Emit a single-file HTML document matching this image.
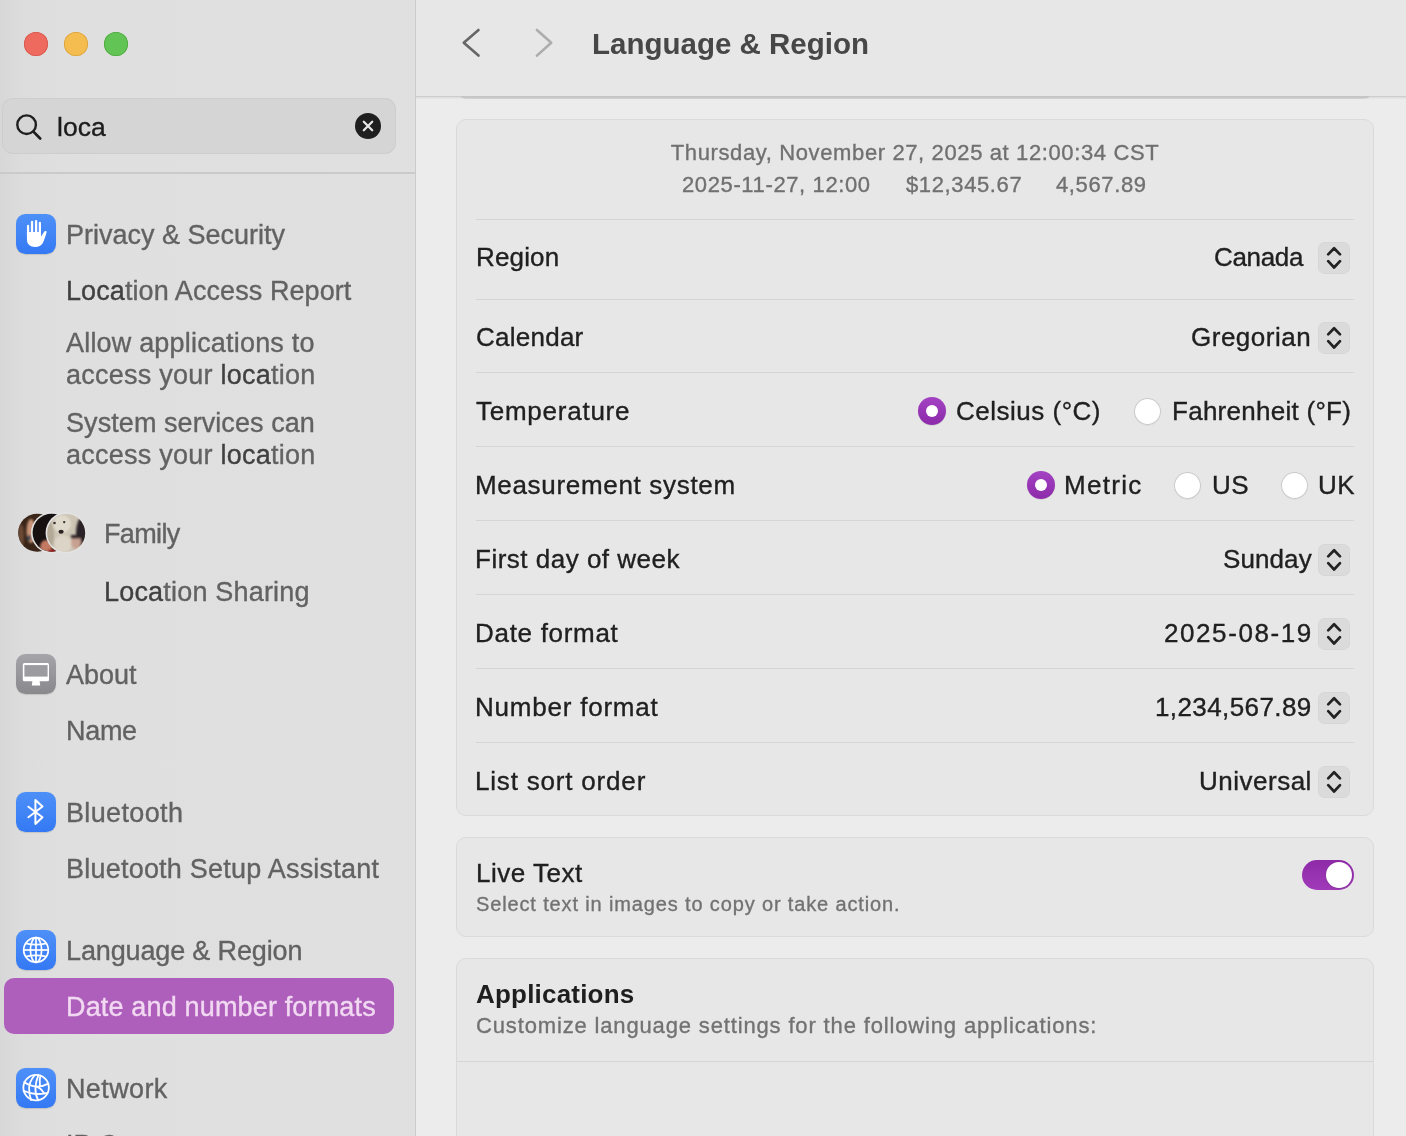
<!DOCTYPE html>
<html><head><meta charset="utf-8"><style>
html,body{margin:0;padding:0;width:1406px;height:1136px;overflow:hidden;background:#ececec;}
body{position:relative;font-family:"Liberation Sans", sans-serif;-webkit-font-smoothing:antialiased;}
.t{position:absolute;white-space:nowrap;line-height:1;-webkit-text-stroke:0.35px currentColor;will-change:transform;}
</style></head><body>
<div style="position:absolute;left:0px;top:0px;width:415px;height:1136px;background:linear-gradient(90deg,#d7d7d7 0,#dcdcdc 20px,#dfdfdf 60px,#e0e0e0 100%);"></div>
<div style="position:absolute;left:415px;top:0px;width:1px;height:1136px;background:#cbcbcb;"></div>
<div style="position:absolute;left:24px;top:32px;width:24px;height:24px;border-radius:50%;background:#ee6a5f;box-shadow:inset 0 0 0 0.8px #d5574c;"></div>
<div style="position:absolute;left:64px;top:32px;width:24px;height:24px;border-radius:50%;background:#f5bd4f;box-shadow:inset 0 0 0 0.8px #d9a13c;"></div>
<div style="position:absolute;left:104px;top:32px;width:24px;height:24px;border-radius:50%;background:#61c454;box-shadow:inset 0 0 0 0.8px #4ea83f;"></div>
<div style="position:absolute;left:2px;top:98px;width:394px;height:56px;background:#d5d5d5;border-radius:11px;box-shadow:inset 0 0 0 1px rgba(0,0,0,0.035);"></div>
<svg style="position:absolute;left:14px;top:111.5px" width="30" height="30" viewBox="0 0 30 30"><circle cx="12.6" cy="12.7" r="9.3" fill="none" stroke="#1e1e1e" stroke-width="2.4"/><line x1="19.4" y1="19.6" x2="26.2" y2="26.5" stroke="#1e1e1e" stroke-width="2.7" stroke-linecap="round"/></svg>
<div class="t" style="top:113.77px;font-size:26.5px;color:#1c1c1c;left:57px;">loca</div>
<svg style="position:absolute;left:355px;top:113px" width="26" height="26" viewBox="0 0 26 26"><circle cx="13" cy="13" r="13" fill="#1f1f1f"/><path d="M8.8 8.8 L17.2 17.2 M17.2 8.8 L8.8 17.2" stroke="#e6e6e6" stroke-width="2.3" stroke-linecap="round"/></svg>
<div style="position:absolute;left:0px;top:172px;width:415px;height:2px;background:#cacaca;"></div>
<div style="position:absolute;left:16px;top:214px;width:40px;height:40px;border-radius:9.5px;background:linear-gradient(#4e90f8,#3479f4);box-shadow:0 0.5px 1px rgba(0,0,0,0.12);"><svg width="40" height="40" viewBox="0 0 40 40" style="position:absolute;left:0;top:0"><path fill="#fff" d="M10.95,18 L24.95,18 L24.95,22.8 L28.3,17.6 C29,16.5 30.9,16.9 30.6,18.3 C30.1,20.5 28.6,24.8 27.2,28.3 C25.9,31.5 23.2,33 19,33 C14.2,33 10.95,30 10.95,25.8 Z"/><rect x="10.95" y="10.8" width="2.25" height="12" rx="1.12" fill="#fff"/><rect x="14.85" y="6.7" width="2.35" height="14" rx="1.17" fill="#fff"/><rect x="18.9" y="5.95" width="2.35" height="14" rx="1.17" fill="#fff"/><rect x="22.75" y="7.7" width="2.25" height="14" rx="1.12" fill="#fff"/></svg></div>
<div class="t" style="top:222.14px;font-size:27px;color:#626262;left:66px;">Privacy &amp; Security</div>
<div class="t" style="top:278.14px;font-size:27px;color:#626262;letter-spacing:0.08px;left:66px;"><span style="color:#404040">Loca</span>tion Access Report</div>
<div class="t" style="top:330.14px;font-size:27px;color:#626262;letter-spacing:0.19px;left:66px;">Allow applications to</div>
<div class="t" style="top:362.14px;font-size:27px;color:#626262;letter-spacing:0.24px;left:66px;">access your <span style="color:#404040">loca</span>tion</div>
<div class="t" style="top:410.14px;font-size:27px;color:#626262;letter-spacing:0.07px;left:66px;">System services can</div>
<div class="t" style="top:442.14px;font-size:27px;color:#626262;letter-spacing:0.24px;left:66px;">access your <span style="color:#404040">loca</span>tion</div>
<svg style="position:absolute;left:0;top:500px" width="100" height="60" viewBox="0 0 100 60">
<defs><clipPath id="c1"><circle cx="37.2" cy="32.7" r="19"/></clipPath><clipPath id="c2"><circle cx="51.6" cy="32.7" r="19"/></clipPath><clipPath id="c3"><circle cx="66.2" cy="32.9" r="19"/></clipPath>
<filter id="bl" x="-20%" y="-20%" width="140%" height="140%"><feGaussianBlur stdDeviation="1.1"/></filter></defs>
<g clip-path="url(#c1)"><rect x="0" y="0" width="100" height="60" fill="#3a2518"/><g filter="url(#bl)"><ellipse cx="31" cy="31" rx="4.5" ry="12" fill="#c99478"/><ellipse cx="21" cy="36" rx="3" ry="12" fill="#6a4a36"/><ellipse cx="29" cy="38" rx="2" ry="3" fill="#3a4a55"/></g></g>
<circle cx="51.6" cy="32.7" r="20.6" fill="#e3e3e3"/>
<g clip-path="url(#c2)"><rect x="0" y="0" width="100" height="60" fill="#161010"/><g filter="url(#bl)"><ellipse cx="46" cy="47" rx="6" ry="7" fill="#c47a62"/><ellipse cx="52" cy="52" rx="5" ry="3" fill="#a02020"/></g></g>
<circle cx="66.2" cy="32.9" r="20.6" fill="#e3e3e3"/>
<g clip-path="url(#c3)"><rect x="0" y="0" width="100" height="60" fill="#cdc4b4"/><g filter="url(#bl)"><ellipse cx="50" cy="36" rx="4" ry="14" fill="#b3a896"/><ellipse cx="62" cy="24" rx="9" ry="9" fill="#e0dacd"/><ellipse cx="63" cy="44" rx="9" ry="9" fill="#dcd5c7"/>
<ellipse cx="81.5" cy="33" rx="5.5" ry="15" fill="#2a2426"/><ellipse cx="76" cy="42" rx="5" ry="7" fill="#c9a192"/><rect x="70.5" y="35" width="10" height="3.5" rx="1.7" fill="#2c2426"/></g>
<circle cx="54.5" cy="23" r="1.3" fill="#3a3030"/><circle cx="64.2" cy="22.1" r="1.2" fill="#3a3030"/><ellipse cx="61.1" cy="31.8" rx="2.6" ry="2" fill="#2a2222"/></g>
</svg>
<div class="t" style="top:520.64px;font-size:27px;color:#626262;letter-spacing:-0.65px;left:104px;">Family</div>
<div class="t" style="top:578.74px;font-size:27px;color:#626262;letter-spacing:0.19px;left:104px;"><span style="color:#404040">Loca</span>tion Sharing</div>
<div style="position:absolute;left:16px;top:654px;width:40px;height:40px;border-radius:9.5px;background:linear-gradient(#a4a4a9,#88888d);box-shadow:0 0.5px 1px rgba(0,0,0,0.12);"><svg width="40" height="40" viewBox="0 0 40 40" style="position:absolute;left:0;top:0"><rect x="6.8" y="9.1" width="26.2" height="18.2" rx="1.6" fill="#fff"/><rect x="8.4" y="11.1" width="23.2" height="11.5" fill="#9c9ca0"/><path d="M16.4,27 L23.6,27 L24.2,31.6 L15.8,31.6 Z" fill="#fff"/></svg></div>
<div class="t" style="top:661.89px;font-size:27px;color:#626262;left:66px;">About</div>
<div class="t" style="top:718.14px;font-size:27px;color:#626262;letter-spacing:-0.3px;left:66px;">Name</div>
<div style="position:absolute;left:16px;top:792px;width:40px;height:40px;border-radius:9.5px;background:linear-gradient(#4e90f8,#3479f4);box-shadow:0 0.5px 1px rgba(0,0,0,0.12);"><svg width="40" height="40" viewBox="0 0 40 40" style="position:absolute;left:0;top:0"><path d="M12.4,14.7 L26.5,25.2 L19.4,31.9 L19.4,7.9 L26.5,14.5 L12.4,25.2" fill="none" stroke="#fff" stroke-width="2" stroke-linejoin="round" stroke-linecap="round"/></svg></div>
<div class="t" style="top:800.14px;font-size:27px;color:#626262;letter-spacing:0.36px;left:66px;">Bluetooth</div>
<div class="t" style="top:856.14px;font-size:27px;color:#626262;letter-spacing:0.22px;left:66px;">Bluetooth Setup Assistant</div>
<div style="position:absolute;left:16px;top:930px;width:40px;height:40px;border-radius:9.5px;background:linear-gradient(#4e90f8,#3479f4);box-shadow:0 0.5px 1px rgba(0,0,0,0.12);"><svg width="40" height="40" viewBox="0 0 40 40" style="position:absolute;left:0;top:0"><g fill="none" stroke="#fff" stroke-width="1.7"><circle cx="20" cy="20" r="12.3"/><ellipse cx="20" cy="20" rx="5.6" ry="12.3"/><line x1="20" y1="7.7" x2="20" y2="32.3"/><line x1="7.7" y1="20" x2="32.3" y2="20"/><path d="M9.6,13.4 Q20,16 30.4,13.4 M9.6,26.6 Q20,24 30.4,26.6"/></g></svg></div>
<div class="t" style="top:937.64px;font-size:27px;color:#626262;letter-spacing:-0.14px;left:66px;">Language &amp; Region</div>
<div style="position:absolute;left:4px;top:978px;width:390px;height:56px;background:#ad5fbb;border-radius:10px;"></div>
<div class="t" style="top:993.74px;font-size:27px;color:#f2d9f2;letter-spacing:0.16px;left:66px;">Date and number formats</div>
<div style="position:absolute;left:16px;top:1068px;width:40px;height:40px;border-radius:9.5px;background:linear-gradient(#4e90f8,#3479f4);box-shadow:0 0.5px 1px rgba(0,0,0,0.12);"><svg width="40" height="40" viewBox="0 0 40 40" style="position:absolute;left:0;top:0"><g fill="none" stroke="#fff" stroke-width="1.8" stroke-linecap="round"><circle cx="20.1" cy="19.6" r="12.75"/><path d="M18.6,7.2 C15.5,11 13.2,15 13.1,20 C13,25 13.8,28.5 15,32"/><path d="M22.4,7.1 C20.8,11 19.6,15.5 19.4,20 C19.2,25 20.2,28.5 22.2,32.2"/><path d="M24.4,7.6 C23.5,11 23.4,14 24,17.8"/><path d="M8.2,14 C12,16.8 16,18.3 20.5,18.6 C24.5,18.8 28.5,17.6 32.4,15.6"/><path d="M7.6,22.8 C11.5,24.6 15.5,25.8 20,26 C24,26.1 28,25.6 31.6,24.8"/><path d="M20.5,18.6 C23.5,19.6 26,21.8 28.2,25.4"/></g></svg></div>
<div class="t" style="top:1075.89px;font-size:27px;color:#626262;letter-spacing:0.37px;left:66px;">Network</div>
<div class="t" style="top:1132.14px;font-size:27px;color:#626262;left:66px;">IP Camera</div>
<div style="position:absolute;left:416px;top:0px;width:990px;height:1136px;background:#ececec;"></div>
<div style="position:absolute;left:416px;top:0px;width:990px;height:96px;background:#e7e7e7;"></div>
<div style="position:absolute;left:416px;top:96px;width:990px;height:1px;background:#cdcdcd;"></div>
<div style="position:absolute;left:416px;top:97px;width:990px;height:2px;background:linear-gradient(#dcdcdc,#e8e8e8);"></div>
<div style="position:absolute;left:461px;top:96px;width:908px;height:2.6px;background:linear-gradient(#c4c4c4,#c8c8c8 60%,#d6d6d6);border-radius:0 0 6px 6px / 0 0 2.6px 2.6px;"></div>
<svg style="position:absolute;left:455px;top:22px" width="100" height="42" viewBox="0 0 100 42"><path d="M23.5,8 L8.75,20.75 L23.5,33.6" fill="none" stroke="#666" stroke-width="2.6" stroke-linecap="round" stroke-linejoin="round"/><path d="M81.9,8 L96.25,20.75 L81.9,33.6" fill="none" stroke="#adadad" stroke-width="2.6" stroke-linecap="round" stroke-linejoin="round"/></svg>
<div class="t" style="top:28.63px;font-size:29.5px;color:#474747;font-weight:700;-webkit-text-stroke:0;left:592px;">Language &amp; Region</div>
<div style="position:absolute;left:456px;top:119px;width:918px;height:697px;background:#e7e7e7;border:1px solid #dadada;border-radius:10px;box-sizing:border-box;"></div>
<div style="position:absolute;left:456px;top:837px;width:918px;height:100px;background:#e7e7e7;border:1px solid #dadada;border-radius:10px;box-sizing:border-box;"></div>
<div style="position:absolute;left:456px;top:958px;width:918px;height:200px;background:#e7e7e7;border:1px solid #dadada;border-radius:10px;box-sizing:border-box;"></div>
<div class="t" style="top:142.28px;font-size:22px;color:#707070;letter-spacing:0.62px;left:915px;transform:translateX(-50%);">Thursday, November 27, 2025 at 12:00:34 CST</div>
<div class="t" style="top:173.68px;font-size:22px;color:#707070;letter-spacing:0.62px;left:682px;">2025-11-27, 12:00</div>
<div class="t" style="top:173.68px;font-size:22px;color:#707070;letter-spacing:0.62px;left:906px;">$12,345.67</div>
<div class="t" style="top:173.68px;font-size:22px;color:#707070;letter-spacing:0.62px;left:1056px;">4,567.89</div>
<div style="position:absolute;left:476px;top:219px;width:878px;height:1px;background:#d5d5d5;"></div>
<div style="position:absolute;left:476px;top:299px;width:878px;height:1px;background:#d5d5d5;"></div>
<div style="position:absolute;left:476px;top:372px;width:878px;height:1px;background:#d5d5d5;"></div>
<div style="position:absolute;left:476px;top:446px;width:878px;height:1px;background:#d5d5d5;"></div>
<div style="position:absolute;left:476px;top:520px;width:878px;height:1px;background:#d5d5d5;"></div>
<div style="position:absolute;left:476px;top:594px;width:878px;height:1px;background:#d5d5d5;"></div>
<div style="position:absolute;left:476px;top:668px;width:878px;height:1px;background:#d5d5d5;"></div>
<div style="position:absolute;left:476px;top:742px;width:878px;height:1px;background:#d5d5d5;"></div>
<div class="t" style="top:243.99px;font-size:26px;color:#202020;letter-spacing:0.15px;left:476px;">Region</div>
<div class="t" style="top:323.59px;font-size:26px;color:#202020;letter-spacing:0.25px;left:476px;">Calendar</div>
<div class="t" style="top:397.74px;font-size:26px;color:#202020;letter-spacing:0.75px;left:476px;">Temperature</div>
<div class="t" style="top:471.74px;font-size:26px;color:#202020;letter-spacing:0.68px;left:475px;">Measurement system</div>
<div class="t" style="top:546.09px;font-size:26px;color:#202020;letter-spacing:0.5px;left:475px;">First day of week</div>
<div class="t" style="top:619.99px;font-size:26px;color:#202020;letter-spacing:0.7px;left:475px;">Date format</div>
<div class="t" style="top:693.89px;font-size:26px;color:#202020;letter-spacing:0.78px;left:475px;">Number format</div>
<div class="t" style="top:767.59px;font-size:26px;color:#202020;letter-spacing:0.81px;left:475px;">List sort order</div>
<div style="position:absolute;left:1318px;top:242px;width:32px;height:32px;border-radius:7px;background:#dbdbdb;box-shadow:inset 0 0 0 0.5px rgba(0,0,0,0.04);"><svg width="32" height="32" viewBox="0 0 32 32" style="position:absolute;left:0;top:0"><path d="M10.2,12.4 L16.1,6.3 L22,12.4 M10.2,19.2 L16.1,25.5 L22,19.2" fill="none" stroke="#222" stroke-width="2.7" stroke-linecap="round" stroke-linejoin="round"/></svg></div>
<div class="t" style="top:243.99px;font-size:26px;color:#202020;letter-spacing:-0.34px;right:102.5px;">Canada</div>
<div style="position:absolute;left:1318px;top:322px;width:32px;height:32px;border-radius:7px;background:#dbdbdb;box-shadow:inset 0 0 0 0.5px rgba(0,0,0,0.04);"><svg width="32" height="32" viewBox="0 0 32 32" style="position:absolute;left:0;top:0"><path d="M10.2,12.4 L16.1,6.3 L22,12.4 M10.2,19.2 L16.1,25.5 L22,19.2" fill="none" stroke="#222" stroke-width="2.7" stroke-linecap="round" stroke-linejoin="round"/></svg></div>
<div class="t" style="top:323.59px;font-size:26px;color:#202020;letter-spacing:0.5px;right:95px;">Gregorian</div>
<div style="position:absolute;left:1318px;top:544px;width:32px;height:32px;border-radius:7px;background:#dbdbdb;box-shadow:inset 0 0 0 0.5px rgba(0,0,0,0.04);"><svg width="32" height="32" viewBox="0 0 32 32" style="position:absolute;left:0;top:0"><path d="M10.2,12.4 L16.1,6.3 L22,12.4 M10.2,19.2 L16.1,25.5 L22,19.2" fill="none" stroke="#222" stroke-width="2.7" stroke-linecap="round" stroke-linejoin="round"/></svg></div>
<div class="t" style="top:546.09px;font-size:26px;color:#202020;letter-spacing:0.1px;right:94.5px;">Sunday</div>
<div style="position:absolute;left:1318px;top:618px;width:32px;height:32px;border-radius:7px;background:#dbdbdb;box-shadow:inset 0 0 0 0.5px rgba(0,0,0,0.04);"><svg width="32" height="32" viewBox="0 0 32 32" style="position:absolute;left:0;top:0"><path d="M10.2,12.4 L16.1,6.3 L22,12.4 M10.2,19.2 L16.1,25.5 L22,19.2" fill="none" stroke="#222" stroke-width="2.7" stroke-linecap="round" stroke-linejoin="round"/></svg></div>
<div class="t" style="top:619.99px;font-size:26px;color:#202020;letter-spacing:1.58px;right:93.5px;">2025-08-19</div>
<div style="position:absolute;left:1318px;top:692px;width:32px;height:32px;border-radius:7px;background:#dbdbdb;box-shadow:inset 0 0 0 0.5px rgba(0,0,0,0.04);"><svg width="32" height="32" viewBox="0 0 32 32" style="position:absolute;left:0;top:0"><path d="M10.2,12.4 L16.1,6.3 L22,12.4 M10.2,19.2 L16.1,25.5 L22,19.2" fill="none" stroke="#222" stroke-width="2.7" stroke-linecap="round" stroke-linejoin="round"/></svg></div>
<div class="t" style="top:693.89px;font-size:26px;color:#202020;letter-spacing:0.4px;right:94px;">1,234,567.89</div>
<div style="position:absolute;left:1318px;top:766px;width:32px;height:32px;border-radius:7px;background:#dbdbdb;box-shadow:inset 0 0 0 0.5px rgba(0,0,0,0.04);"><svg width="32" height="32" viewBox="0 0 32 32" style="position:absolute;left:0;top:0"><path d="M10.2,12.4 L16.1,6.3 L22,12.4 M10.2,19.2 L16.1,25.5 L22,19.2" fill="none" stroke="#222" stroke-width="2.7" stroke-linecap="round" stroke-linejoin="round"/></svg></div>
<div class="t" style="top:767.59px;font-size:26px;color:#202020;letter-spacing:0.5px;right:94px;">Universal</div>
<div style="position:absolute;left:918px;top:397px;width:28px;height:28px;border-radius:50%;background:linear-gradient(#a342c2,#8c2aaa);box-shadow:0 0.5px 1px rgba(0,0,0,0.15);"><div style="position:absolute;left:8px;top:8px;width:12px;height:12px;border-radius:50%;background:#fff;"></div></div>
<div class="t" style="top:397.99px;font-size:26px;color:#202020;letter-spacing:0.5px;left:956px;">Celsius (°C)</div>
<div style="position:absolute;left:1134.3px;top:397.5px;width:27px;height:27px;border-radius:50%;background:#fff;box-shadow:inset 0 0 0 1px #c9c9c9,0 0.5px 1px rgba(0,0,0,0.08);"></div>
<div class="t" style="top:397.99px;font-size:26px;color:#202020;letter-spacing:0.27px;left:1172px;">Fahrenheit (°F)</div>
<div style="position:absolute;left:1027px;top:471px;width:28px;height:28px;border-radius:50%;background:linear-gradient(#a342c2,#8c2aaa);box-shadow:0 0.5px 1px rgba(0,0,0,0.15);"><div style="position:absolute;left:8px;top:8px;width:12px;height:12px;border-radius:50%;background:#fff;"></div></div>
<div class="t" style="top:471.74px;font-size:26px;color:#202020;letter-spacing:1.3px;left:1064px;">Metric</div>
<div style="position:absolute;left:1174.3px;top:471.5px;width:27px;height:27px;border-radius:50%;background:#fff;box-shadow:inset 0 0 0 1px #c9c9c9,0 0.5px 1px rgba(0,0,0,0.08);"></div>
<div class="t" style="top:471.74px;font-size:26px;color:#202020;letter-spacing:0.5px;left:1212px;">US</div>
<div style="position:absolute;left:1280.5px;top:471.5px;width:27px;height:27px;border-radius:50%;background:#fff;box-shadow:inset 0 0 0 1px #c9c9c9,0 0.5px 1px rgba(0,0,0,0.08);"></div>
<div class="t" style="top:471.74px;font-size:26px;color:#202020;letter-spacing:0.5px;left:1318px;">UK</div>
<div class="t" style="top:859.99px;font-size:26px;color:#202020;letter-spacing:0.5px;left:476px;">Live Text</div>
<div class="t" style="top:893.67px;font-size:20px;color:#727272;letter-spacing:0.86px;left:476.4px;">Select text in images to copy or take action.</div>
<div style="position:absolute;left:1302px;top:860px;width:52px;height:30px;border-radius:15px;background:linear-gradient(#8e2aa8,#a03ab8);"><div style="position:absolute;left:24px;top:2px;width:26px;height:26px;border-radius:50%;background:#fff;box-shadow:0 0.5px 1.5px rgba(0,0,0,0.25);"></div></div>
<div class="t" style="top:980.99px;font-size:26px;color:#1e1e1e;font-weight:700;-webkit-text-stroke:0;letter-spacing:0.2px;left:475.5px;">Applications</div>
<div class="t" style="top:1015.38px;font-size:22px;color:#727272;letter-spacing:0.85px;left:476.4px;">Customize language settings for the following applications:</div>
<div style="position:absolute;left:457px;top:1061px;width:916px;height:1px;background:#d5d5d5;"></div>
</body></html>
